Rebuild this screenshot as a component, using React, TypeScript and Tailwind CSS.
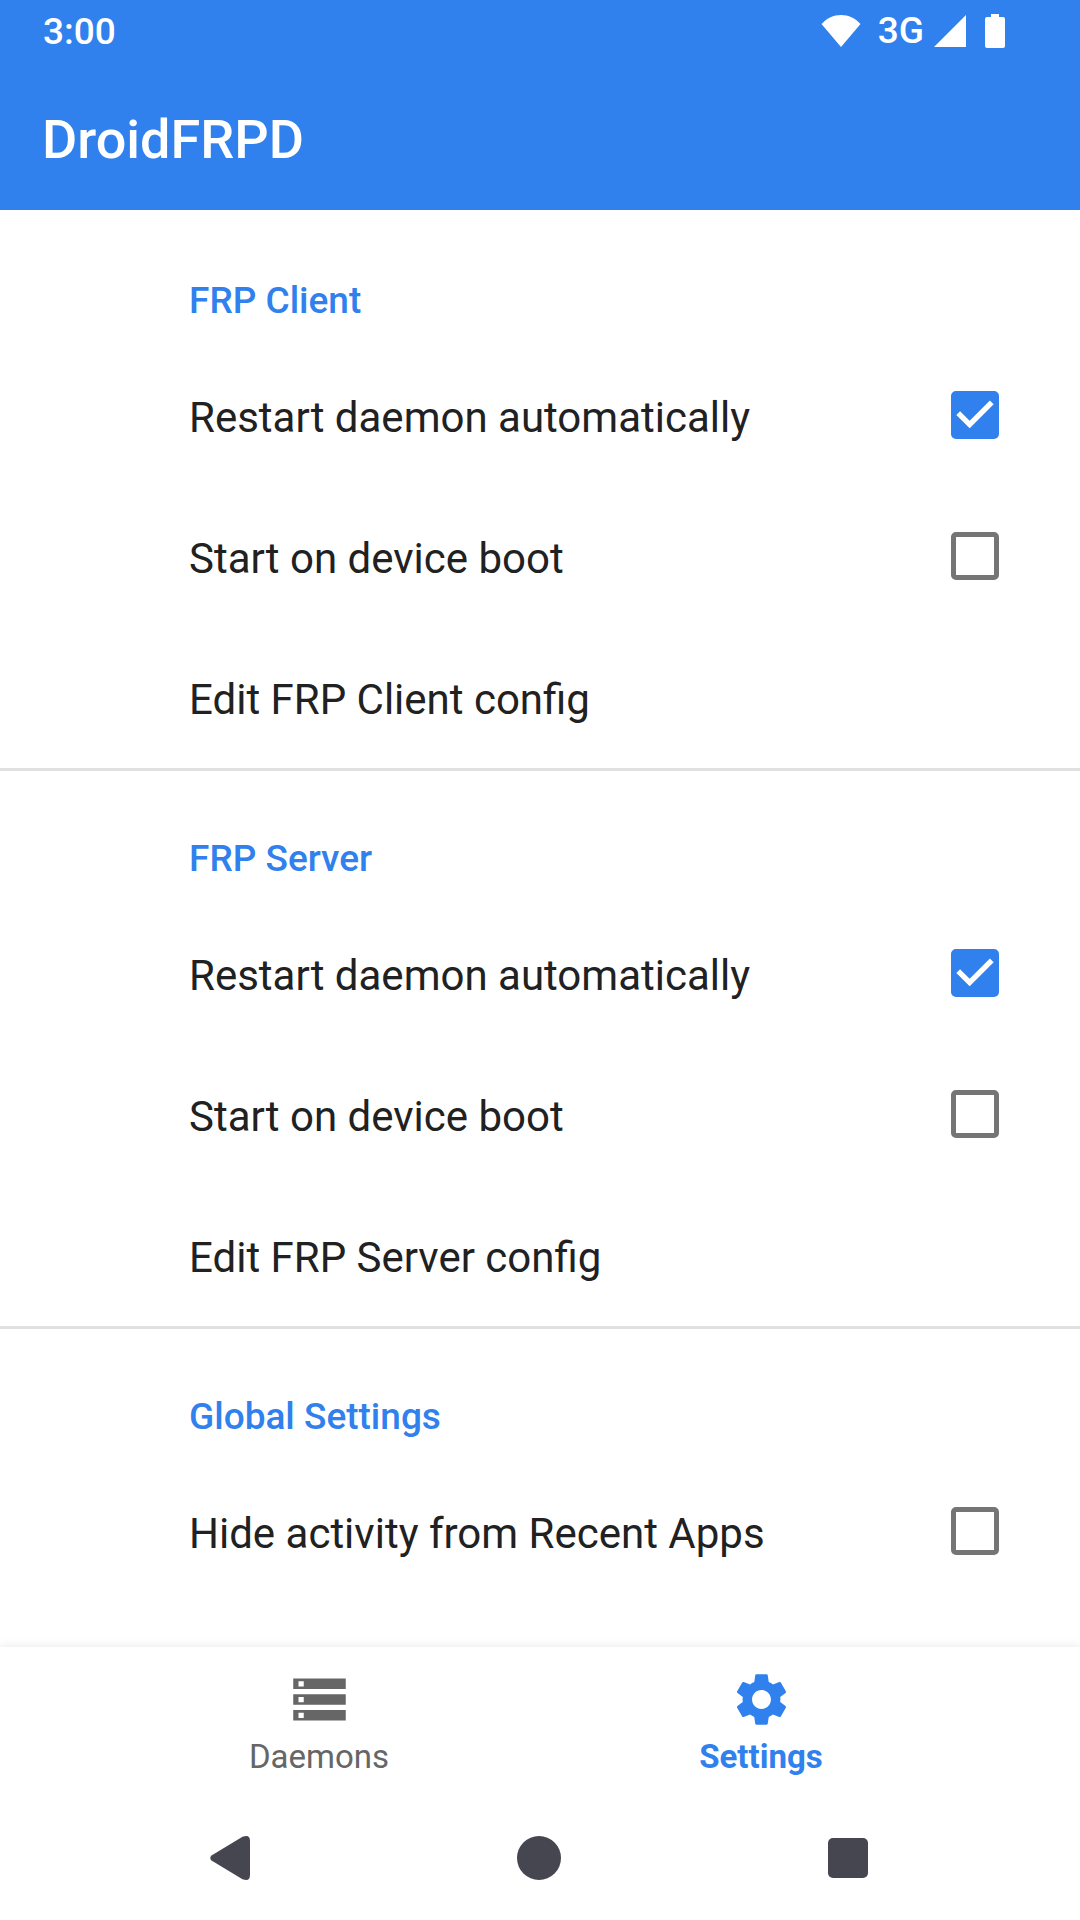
import { useState } from "react";
import { MdSettings, MdStorage } from "react-icons/md";

type Item = { label: string; checked?: boolean };
type Section = { title: string; items: Item[] };

const sections: Section[] = [
  {
    title: "FRP Client",
    items: [
      { label: "Restart daemon automatically", checked: true },
      { label: "Start on device boot", checked: false },
      { label: "Edit FRP Client config" },
    ],
  },
  {
    title: "FRP Server",
    items: [
      { label: "Restart daemon automatically", checked: true },
      { label: "Start on device boot", checked: false },
      { label: "Edit FRP Server config" },
    ],
  },
  {
    title: "Global Settings",
    items: [{ label: "Hide activity from Recent Apps", checked: false }],
  },
];

function StatusBar() {
  return (
    <div className="flex h-[63px] items-center justify-between pl-[43px] pr-[75px] text-[37px] leading-none">
      <span className="font-medium">3:00</span>
      <div className="flex items-center pb-[2px]">
        <svg className="h-8 w-10" viewBox="0 0 40 32" fill="currentColor" aria-hidden="true">
          <path d="M20 32 0.500 9C6 3 12.500 0 20 0S34 3 39.500 9z" />
        </svg>
        <span className="ml-[17px] font-medium">3G</span>
        <svg className="ml-[10px] h-8 w-8" viewBox="0 0 32 32" fill="currentColor" aria-hidden="true">
          <path d="M0 32 32 0v32z" />
        </svg>
        <svg className="ml-[19px] h-[34px] w-5" viewBox="0 0 20 34" fill="currentColor" aria-hidden="true">
          <path d="M6 0h8v3h4a2 2 0 0 1 2 2v27a2 2 0 0 1-2 2H2a2 2 0 0 1-2-2V5a2 2 0 0 1 2-2h4z" />
        </svg>
      </div>
    </div>
  );
}

function CheckRow({ label, initial }: { label: string; initial: boolean }) {
  const [checked, setChecked] = useState(initial);
  return (
    <label className="flex h-[141px] items-center justify-between pb-[2px] pl-[189px] pr-[81px]">
      <span className="pt-[6px]">{label}</span>
      <span className="grid h-12 w-12 shrink-0">
        <input
          type="checkbox"
          checked={checked}
          onChange={(e) => setChecked(e.target.checked)}
          className="col-start-1 row-start-1 h-12 w-12 appearance-none rounded-[5px] border-[5px] border-[#757575] checked:border-[#3080ed] checked:bg-[#3080ed]"
        />
        {checked && (
          <svg
            className="pointer-events-none col-start-1 row-start-1 h-12 w-12"
            viewBox="3 3 18 18"
            fill="white"
            aria-hidden="true"
          >
            <path d="M10 17l-5-5 1.410-1.410L10 14.170l7.590-7.590L19 8z" />
          </svg>
        )}
      </span>
    </label>
  );
}

export default function App() {
  return (
    <div className="flex min-h-screen flex-col bg-white font-['Roboto',sans-serif] text-[#212121]">
      <header className="bg-[#3080ed] text-white">
        <StatusBar />
        <div className="flex h-[147px] items-center px-[42px] pt-[6px]">
          <h1 className="text-[54px] leading-none font-medium">DroidFRPD</h1>
        </div>
      </header>

      <main className="flex-1 text-[42px] leading-[48px]">
        {sections.map((section, index) => (
          <section key={section.title}>
            <h2
              className={
                "flex h-[135px] items-end pb-[23px] pl-[189px] text-[37px] leading-[42px] font-medium text-[#3080ed]" +
                (index > 0 ? " border-t-[3px] border-[#e0e0e0]" : "")
              }
            >
              {section.title}
            </h2>
            {section.items.map((item) =>
              item.checked === undefined ? (
                <button
                  key={item.label}
                  type="button"
                  className="flex h-[141px] w-full items-center pt-1 pl-[189px] text-left"
                >
                  {item.label}
                </button>
              ) : (
                <CheckRow key={item.label} label={item.label} initial={item.checked} />
              ),
            )}
          </section>
        ))}
      </main>

      <nav className="flex h-[147px] justify-center bg-white text-[33px] leading-[38px] shadow-[0_0_10px_rgba(0,0,0,0.1)]">
        <button type="button" className="flex max-w-[442px] flex-1 flex-col items-center pt-[21px] text-[#666666]">
          <MdStorage className="h-[63px] w-[63px]" />
          <span className="mt-[7px]">Daemons</span>
        </button>
        <button
          type="button"
          aria-current="page"
          className="flex max-w-[442px] flex-1 flex-col items-center pt-[21px] font-bold text-[#3080ed]"
        >
          <MdSettings className="h-[63px] w-[63px]" />
          <span className="mt-[7px]">Settings</span>
        </button>
      </nav>

      <div className="z-10 flex h-[126px] bg-white px-[75px] pt-[2px] pr-[77px] text-[#45464f]">
        <button type="button" aria-label="Back" className="flex flex-1 items-center justify-center">
          <svg className="h-[46px] w-[42px]" viewBox="0 0 42 46" fill="currentColor" aria-hidden="true">
            <path d="M2.500 20.500 33.500 1.800Q41 -1 41 6V40Q41 47 33.500 44.200L2.500 25.500Q0 23 2.500 20.500z" />
          </svg>
        </button>
        <button type="button" aria-label="Home" className="flex flex-1 items-center justify-center">
          <span className="h-11 w-11 rounded-full bg-current" />
        </button>
        <button type="button" aria-label="Recent apps" className="flex flex-1 items-center justify-center">
          <span className="h-10 w-10 rounded-[5px] bg-current" />
        </button>
      </div>
    </div>
  );
}
